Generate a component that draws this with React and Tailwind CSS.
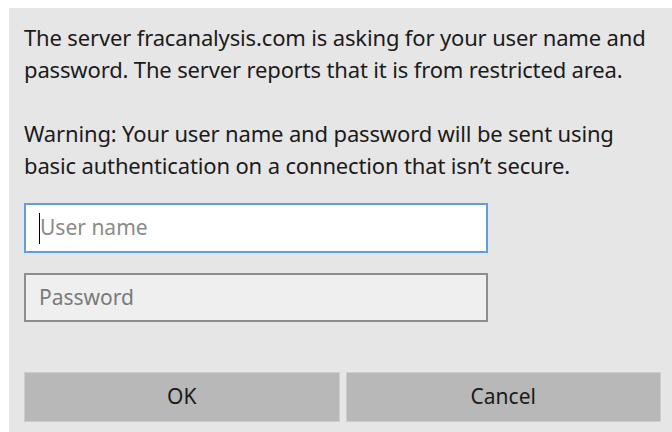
import { useState } from 'react';

const font = { fontFamily: '"Noto Sans", "Open Sans", sans-serif' };

const AuthPrompt = () => {
  const [user, setUser] = useState('');
  const [pass, setPass] = useState('');

  return (
    <div className="w-[672px] h-[432px] bg-white pt-[8px] pl-[9px]" style={font}>
      <div className="h-full bg-[#e6e6e6] pl-[15px] pr-[11px] pt-[13px] flex flex-col">
        <div className="text-[22px] leading-[32px] text-[#1b1b1b] tracking-[-0.15px]">
          <p>
            The server fracanalysis.com is asking for your user name and
            <br />
            password. The server reports that it is from restricted area.
          </p>
          <p className="mt-[32px]">
            Warning: Your user name and password will be sent using
            <br />
            basic authentication on a connection that isn’t secure.
          </p>
        </div>

        {/* user name field, focused */}
        <label className="mt-[22px] w-[464px] h-[50px] bg-white border-2 border-[#5a9fde] flex items-center pl-[13px]">
          <span className="w-px h-[31px] bg-black shrink-0" />
          <input
            value={user}
            onChange={(e) => setUser(e.target.value)}
            placeholder="User name"
            className="flex-1 bg-transparent outline-none text-[21px] text-[#1b1b1b] placeholder:text-[#8a8a8a]"
          />
        </label>

        <label className="mt-[20px] w-[464px] h-[49px] bg-[#efefef] border-2 border-[#8d8d8d] flex items-center pl-[13px]">
          <input
            type="password"
            value={pass}
            onChange={(e) => setPass(e.target.value)}
            placeholder="Password"
            className="flex-1 bg-transparent outline-none text-[21px] text-[#1b1b1b] placeholder:text-[#7a7a7a]"
          />
        </label>

        <div className="mt-[50px] flex gap-[6px]">
          <button className="flex-1 h-[50px] bg-[#b8b8b8] border border-[#cdcdcd] text-[21px] text-[#1b1b1b]">
            OK
          </button>
          <button className="flex-1 h-[50px] bg-[#b8b8b8] border border-[#cdcdcd] text-[21px] text-[#1b1b1b]">
            Cancel
          </button>
        </div>
      </div>
    </div>
  );
};

export default function App() {
  return <AuthPrompt />;
}
